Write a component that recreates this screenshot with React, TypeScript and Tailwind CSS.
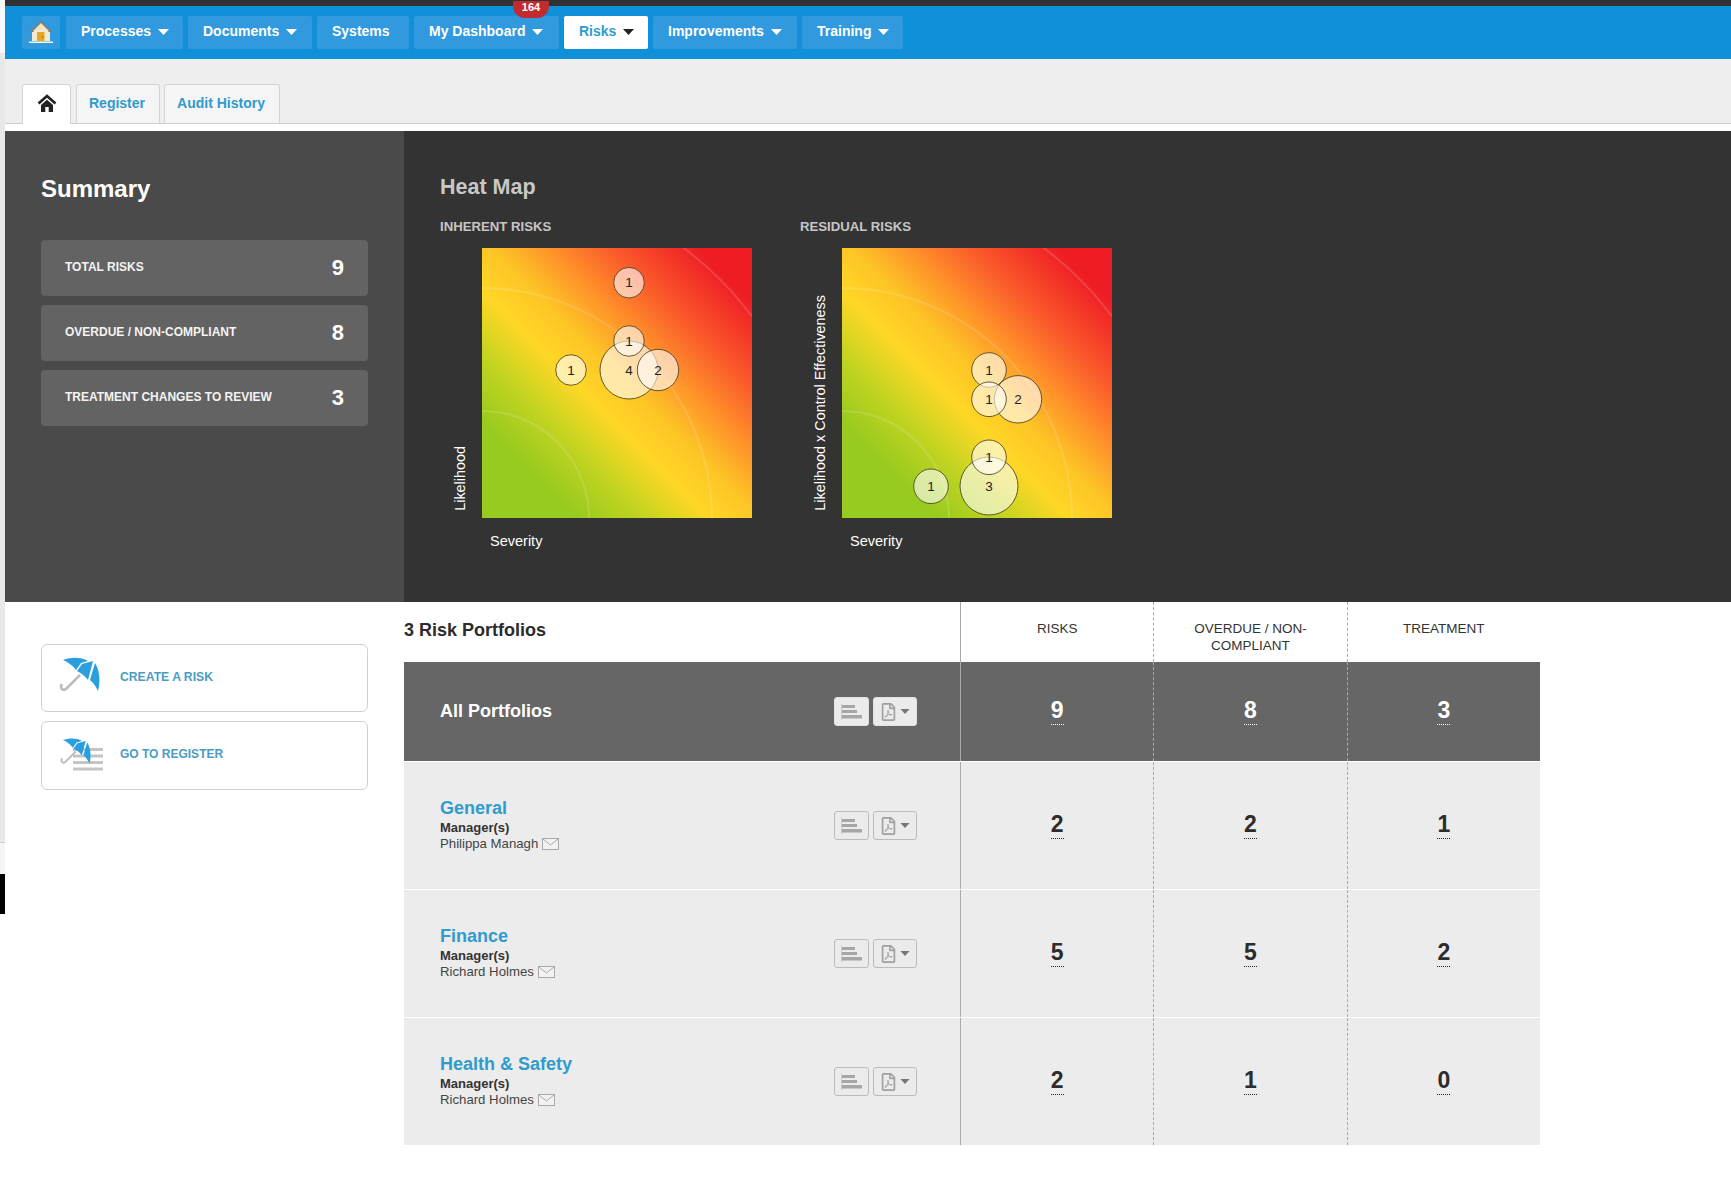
import { FaRegFilePdf } from "react-icons/fa";

const navItems = [
  { label: "Processes", width: "w-[117px]", caret: true },
  { label: "Documents", width: "w-[124px]", caret: true },
  { label: "Systems", width: "w-[92px]", caret: false },
  { label: "My Dashboard", width: "w-[145px]", caret: true, badge: "164" },
  { label: "Risks", width: "w-[84px]", caret: true, active: true },
  { label: "Improvements", width: "w-[144px]", caret: true },
  { label: "Training", width: "w-[101px]", caret: true },
];

const summary = [
  { label: "TOTAL RISKS", value: 9 },
  { label: "OVERDUE / NON-COMPLIANT", value: 8 },
  { label: "TREATMENT CHANGES TO REVIEW", value: 3 },
];

const inherent = [
  { x: 147, y: 122, r: 29, n: 4 },
  { x: 176, y: 122, r: 20.7, n: 2 },
  { x: 147, y: 93, r: 15.3, n: 1 },
  { x: 89, y: 122, r: 15.3, n: 1 },
  { x: 147, y: 34.7, r: 15.3, n: 1 },
];

const residual = [
  { x: 147, y: 122, r: 17.3, n: 1 },
  { x: 176, y: 151.3, r: 23.7, n: 2 },
  { x: 147, y: 151.3, r: 17.3, n: 1 },
  { x: 147, y: 238, r: 29, n: 3 },
  { x: 147, y: 209.3, r: 17.3, n: 1 },
  { x: 89, y: 238.3, r: 17.3, n: 1 },
];

const portfolios = [
  { name: "General", manager: "Philippa Managh", values: [2, 2, 1] },
  { name: "Finance", manager: "Richard Holmes", values: [5, 5, 2] },
  { name: "Health & Safety", manager: "Richard Holmes", values: [2, 1, 0] },
];

function Caret({ className }: { className: string }) {
  return (
    <svg width="11" height="6" viewBox="0 0 11 6" className={className}>
      <path d="M0 0h11L5.5 6z" fill="currentColor" />
    </svg>
  );
}

function HouseLogo() {
  return (
    <svg width="26" height="24" viewBox="0 0 26 24">
      <path d="M4 11h18v10H4z" fill="#f3ead6" />
      <path d="M13 1 2 12h3l8-7 8 7h3z" fill="#8a7a5c" />
      <path d="M13 3 5 11h16z" fill="#efe3c8" />
      <path d="M9 12h7.5v9.5H9z" fill="#e8a825" />
      <circle cx="14.6" cy="17" r=".8" fill="#8a6510" />
      <path d="M1 21.5h24V23H1z" fill="#fbf8ef" />
    </svg>
  );
}

function HomeGlyph() {
  return (
    <svg width="20" height="19" viewBox="0 0 20 19">
      <path d="M1.5 9.5 10 2l8.500 7.500" fill="none" stroke="#222" strokeWidth="2.600" />
      <path d="M4 11 10 5.800 16 11v7h-4.300v-5H8.300v5H4z" fill="#222" />
    </svg>
  );
}

function UmbrellaParts() {
  return (
    <>
      <path d="M30 27 17 40q-3 3-5 1-2-2 0-5" fill="none" stroke="#bcbcbc" strokeWidth="2.500" />
      <path d="M13 12c8-3 18-3 25 1l-7 2-5 7c-4-5-8-8-13-10z" fill="#2a9fe0" />
      <path d="m27 23 5-7 11-3-5 19c-3-4-7-7-11-9z" fill="#2a9fe0" />
      <path d="m45 15c4 6 6 17 3 28-2-4-4-8-8-11z" fill="#2a9fe0" />
    </>
  );
}

function CreateIcon() {
  return (
    <svg width="60" height="52" viewBox="0 0 60 52">
      <g transform="translate(0 -4)">
        <UmbrellaParts />
      </g>
    </svg>
  );
}

function RegisterIcon() {
  return (
    <svg width="60" height="44" viewBox="0 0 60 44">
      <path d="M23 14h30v3H23zM23 20.500h30v3H23zM23 27h30v3H23zM23 33.500h30v3H23z" fill="#c4c4c4" />
      <g transform="translate(3 -3) scale(.76)">
        <UmbrellaParts />
      </g>
    </svg>
  );
}

function HeatMap({ id, bubbles }: { id: string; bubbles: { x: number; y: number; r: number; n: number }[] }) {
  return (
    <svg width="270" height="270" viewBox="0 0 270 270" className="block">
      <defs>
        <linearGradient id={id} x1="0" y1="1" x2="1" y2="0">
          <stop offset="0.18" stopColor="#98cb1f" />
          <stop offset="0.3" stopColor="#c2d321" />
          <stop offset="0.42" stopColor="#ffd726" />
          <stop offset="0.52" stopColor="#fdc426" />
          <stop offset="0.64" stopColor="#ff8a2a" />
          <stop offset="0.74" stopColor="#fb5a2b" />
          <stop offset="0.9" stopColor="#ee1c25" />
        </linearGradient>
      </defs>
      <rect width="270" height="270" fill={`url(#${id})`} />
      {[107, 230, 337].map((r) => (
        <circle key={r} cx="0" cy="270" r={r} fill="none" stroke="#fff" strokeOpacity=".14" strokeWidth="2" />
      ))}
      {bubbles.map((b, i) => (
        <circle key={i} cx={b.x} cy={b.y} r={b.r} fill="#fff" fillOpacity=".6" stroke="#4a3f20" strokeOpacity=".85" strokeWidth="1" />
      ))}
      {bubbles.map((b, i) => (
        <text key={i} x={b.x} y={b.y + 4.500} textAnchor="middle" fontSize="13.500" fill="#222" fontFamily="Liberation Sans, sans-serif">
          {b.n}
        </text>
      ))}
    </svg>
  );
}

function Chart({ title, axis, id, bubbles }: { title: string; axis: string; id: string; bubbles: { x: number; y: number; r: number; n: number }[] }) {
  return (
    <div className="w-[360px] shrink-0">
      <div className="text-[13.200px] leading-4 font-bold text-[#c6c6c6]">{title}</div>
      <div className="mt-[13px] flex">
        <div className="flex w-[42px] items-end justify-center pr-[2px] pb-[7px]">
          <span className="rotate-180 text-[14.400px] leading-4 whitespace-nowrap text-white [writing-mode:vertical-rl]">{axis}</span>
        </div>
        <HeatMap id={id} bubbles={bubbles} />
      </div>
      <div className="mt-[15px] ml-[50px] text-[14.500px] leading-4 text-white">Severity</div>
    </div>
  );
}

function ActionButtons({ dark }: { dark: boolean }) {
  const border = dark ? "border-[#e2e2e2]" : "border-[#bbbbbb]";
  return (
    <div className="flex gap-[4px]">
      <button className={`flex h-[29px] w-[35px] items-center justify-center rounded-[3px] border bg-[#ebebeb] ${border}`}>
        <svg width="22" height="16" viewBox="0 0 22 16">
          <path d="M1 1h13v3H1zM1 6h15v3H1zM1 11h20v3.500H1z" fill="#a6a6a6" />
          <path d="M.5 0v16" stroke="#c8c8c8" strokeWidth="1" />
        </svg>
      </button>
      <button className={`flex h-[29px] w-[44px] items-center justify-center gap-[4px] rounded-[3px] border bg-[#ebebeb] ${border}`}>
        <FaRegFilePdf className="h-[18px] w-[15px] text-[#a0a0a0]" />
        <Caret className="h-[5px] w-[10px] text-[#777777]" />
      </button>
    </div>
  );
}

function MailIcon() {
  return (
    <svg width="17" height="12" viewBox="0 0 17 12" className="ml-[4px]">
      <rect x=".5" y=".5" width="16" height="11" fill="#f2f2f2" stroke="#aaaaaa" />
      <path d="m1 1 7.500 6L16 1" fill="none" stroke="#aaaaaa" />
    </svg>
  );
}

function StatValue({ value, dark }: { value: number; dark: boolean }) {
  return (
    <span
      className={`inline-block w-[13px] border-b border-dotted pb-[2px] text-center text-[23px] leading-6 font-bold ${
        dark ? "border-white text-white" : "border-[#222222] text-[#2c2c2c]"
      }`}
    >
      {value}
    </span>
  );
}

const rowGrid = "grid grid-cols-[556px_1fr_1fr_1fr]";
const solidCell = "flex items-center justify-center border-l border-[#aaaaaa]";
const dashedCell = "flex items-center justify-center border-l border-dashed border-[#aaaaaa]";

export default function App() {
  return (
    <div className="flex min-h-[1196px] bg-white font-['Liberation_Sans',Arial,sans-serif]">
      {/* left edge strip */}
      <div className="flex w-[5px] shrink-0 flex-col">
        <div className="h-[53px] bg-[#f6f9fb]" />
        <div className="h-[789px] bg-[#e8e8e8]" />
        <div className="h-[32px] border-t border-[#cccccc] bg-[#f5f5f5]" />
        <div className="h-[40px] bg-black" />
      </div>

      <div className="min-w-0 flex-1">
        <div className="h-[6px] bg-[#2f3133]" />
        <nav className="flex h-[53px] items-center gap-[5px] bg-[#1090d8] pb-px pl-[17px]">
          <div className="mr-px flex h-[33px] w-[38px] items-center justify-center rounded-[2px] bg-[#3199dd]">
            <HouseLogo />
          </div>
          {navItems.map((item) => (
            <div
              key={item.label}
              className={`relative flex h-[33px] items-center gap-[7px] rounded-[2px] pb-px pl-[15px] text-[14px] font-bold ${item.width} ${
                item.active ? "bg-white text-[#2f9bce]" : "bg-[#3199dd] text-white"
              }`}
            >
              {item.label}
              {item.caret && <Caret className={item.active ? "text-[#222222]" : "text-white"} />}
              {item.badge && (
                <span className="absolute top-[-15px] left-[99px] flex h-[17px] w-[36px] items-center justify-center rounded-b-[12px] bg-[#c32a2d] pb-[3px] text-[11px] font-bold text-white">
                  {item.badge}
                </span>
              )}
            </div>
          ))}
        </nav>

        <div className="flex h-[65px] items-end gap-[5px] border-b border-[#cccccc] bg-[#eeeeee] pl-[17px]">
          <div className="-mb-px flex h-[40px] w-[49px] items-center justify-center rounded-t-[3px] border border-b-0 border-[#d4d4d4] bg-white pb-[2px]">
            <HomeGlyph />
          </div>
          <div className="flex h-[39px] items-center rounded-t-[3px] border border-b-0 border-[#d4d4d4] bg-[#f5f5f5] pr-[14px] pb-[2px] pl-[12px] text-[14px] font-bold text-[#2f9bce]">
            Register
          </div>
          <div className="-ml-px flex h-[39px] items-center rounded-t-[3px] border border-b-0 border-[#d4d4d4] bg-[#f5f5f5] pr-[14px] pb-[2px] pl-[12px] text-[14px] font-bold text-[#2f9bce]">
            Audit History
          </div>
        </div>
        <div className="h-[7px]" />

        <section className="flex h-[471px] bg-[#333333]">
          <div className="w-[399px] shrink-0 bg-[#4a4a4a] pt-[44px] pl-[36px]">
            <h2 className="text-[24px] leading-7 font-bold text-white">Summary</h2>
            <div className="mt-[37px] flex w-[327px] flex-col gap-[9px]">
              {summary.map((s) => (
                <div key={s.label} className="flex h-[56px] items-center justify-between rounded-[4px] bg-[#636363] pr-[24px] pb-[2px] pl-[24px]">
                  <span className="text-[12px] font-bold text-[#f4f4f4]">{s.label}</span>
                  <span className="text-[22px] font-bold text-white">{s.value}</span>
                </div>
              ))}
            </div>
          </div>
          <div className="flex-1 pt-[43px] pl-[36px]">
            <h2 className="text-[21.500px] leading-[26px] font-bold text-[#c8c8c8]">Heat Map</h2>
            <div className="mt-[19px] flex">
              <Chart title="INHERENT RISKS" axis="Likelihood" id="inherent" bubbles={inherent} />
              <Chart title="RESIDUAL RISKS" axis="Likelihood x Control Effectiveness" id="residual" bubbles={residual} />
            </div>
          </div>
        </section>

        <section className="flex">
          <div className="w-[399px] shrink-0 pt-[42px] pl-[36px]">
            <div className="flex w-[327px] flex-col gap-[9px]">
              <div className="flex h-[68px] items-center rounded-[6px] border border-[#cfcfcf] pl-[8px] text-[12.200px] font-bold text-[#4a9cc4]">
                <CreateIcon />
                <span className="ml-[10px] pb-[2px]">CREATE A RISK</span>
              </div>
              <div className="flex h-[69px] items-center rounded-[6px] border border-[#cfcfcf] pl-[8px] text-[12px] font-bold text-[#4a9cc4]">
                <RegisterIcon />
                <span className="ml-[10px] pb-[3px]">GO TO REGISTER</span>
              </div>
            </div>
          </div>

          <div className="w-[1136px] shrink-0">
            <div className={`${rowGrid} h-[60px]`}>
              <div className="pt-[18px] text-[18px] leading-5 font-bold text-[#2c2c2c]">3 Risk Portfolios</div>
              <div className="border-l border-[#aaaaaa] px-6 pt-[18px] text-center text-[13.500px] leading-[17px] text-[#333333]">RISKS</div>
              <div className="border-l border-dashed border-[#aaaaaa] px-6 pt-[18px] text-center text-[13.500px] leading-[17px] text-[#333333]">OVERDUE / NON-COMPLIANT</div>
              <div className="border-l border-dashed border-[#aaaaaa] px-6 pt-[18px] text-center text-[13.500px] leading-[17px] text-[#333333]">TREATMENT</div>
            </div>

            <div className={`${rowGrid} h-[99px] bg-[#666666]`}>
              <div className="flex items-center justify-between pr-[43px] pl-[36px]">
                <span className="pb-[1px] text-[18px] font-bold text-white">All Portfolios</span>
                <ActionButtons dark />
              </div>
              <div className={solidCell}>
                <StatValue value={9} dark />
              </div>
              <div className={dashedCell}>
                <StatValue value={8} dark />
              </div>
              <div className={dashedCell}>
                <StatValue value={3} dark />
              </div>
            </div>

            {portfolios.map((p) => (
              <div key={p.name} className={`${rowGrid} mt-px h-[127px] bg-[#ececec]`}>
                <div className="flex items-center justify-between pr-[43px] pl-[36px]">
                  <div className="mb-[2px]">
                    <div className="text-[18px] leading-[22px] font-bold text-[#2f9bce]">{p.name}</div>
                    <div className="mt-px text-[13px] leading-4 font-bold text-[#333333]">Manager(s)</div>
                    <div className="flex items-center text-[13.200px] leading-4 text-[#444444]">
                      {p.manager}
                      <MailIcon />
                    </div>
                  </div>
                  <ActionButtons dark={false} />
                </div>
                <div className={solidCell}>
                  <StatValue value={p.values[0]} dark={false} />
                </div>
                <div className={dashedCell}>
                  <StatValue value={p.values[1]} dark={false} />
                </div>
                <div className={dashedCell}>
                  <StatValue value={p.values[2]} dark={false} />
                </div>
              </div>
            ))}
          </div>
        </section>
      </div>
    </div>
  );
}
